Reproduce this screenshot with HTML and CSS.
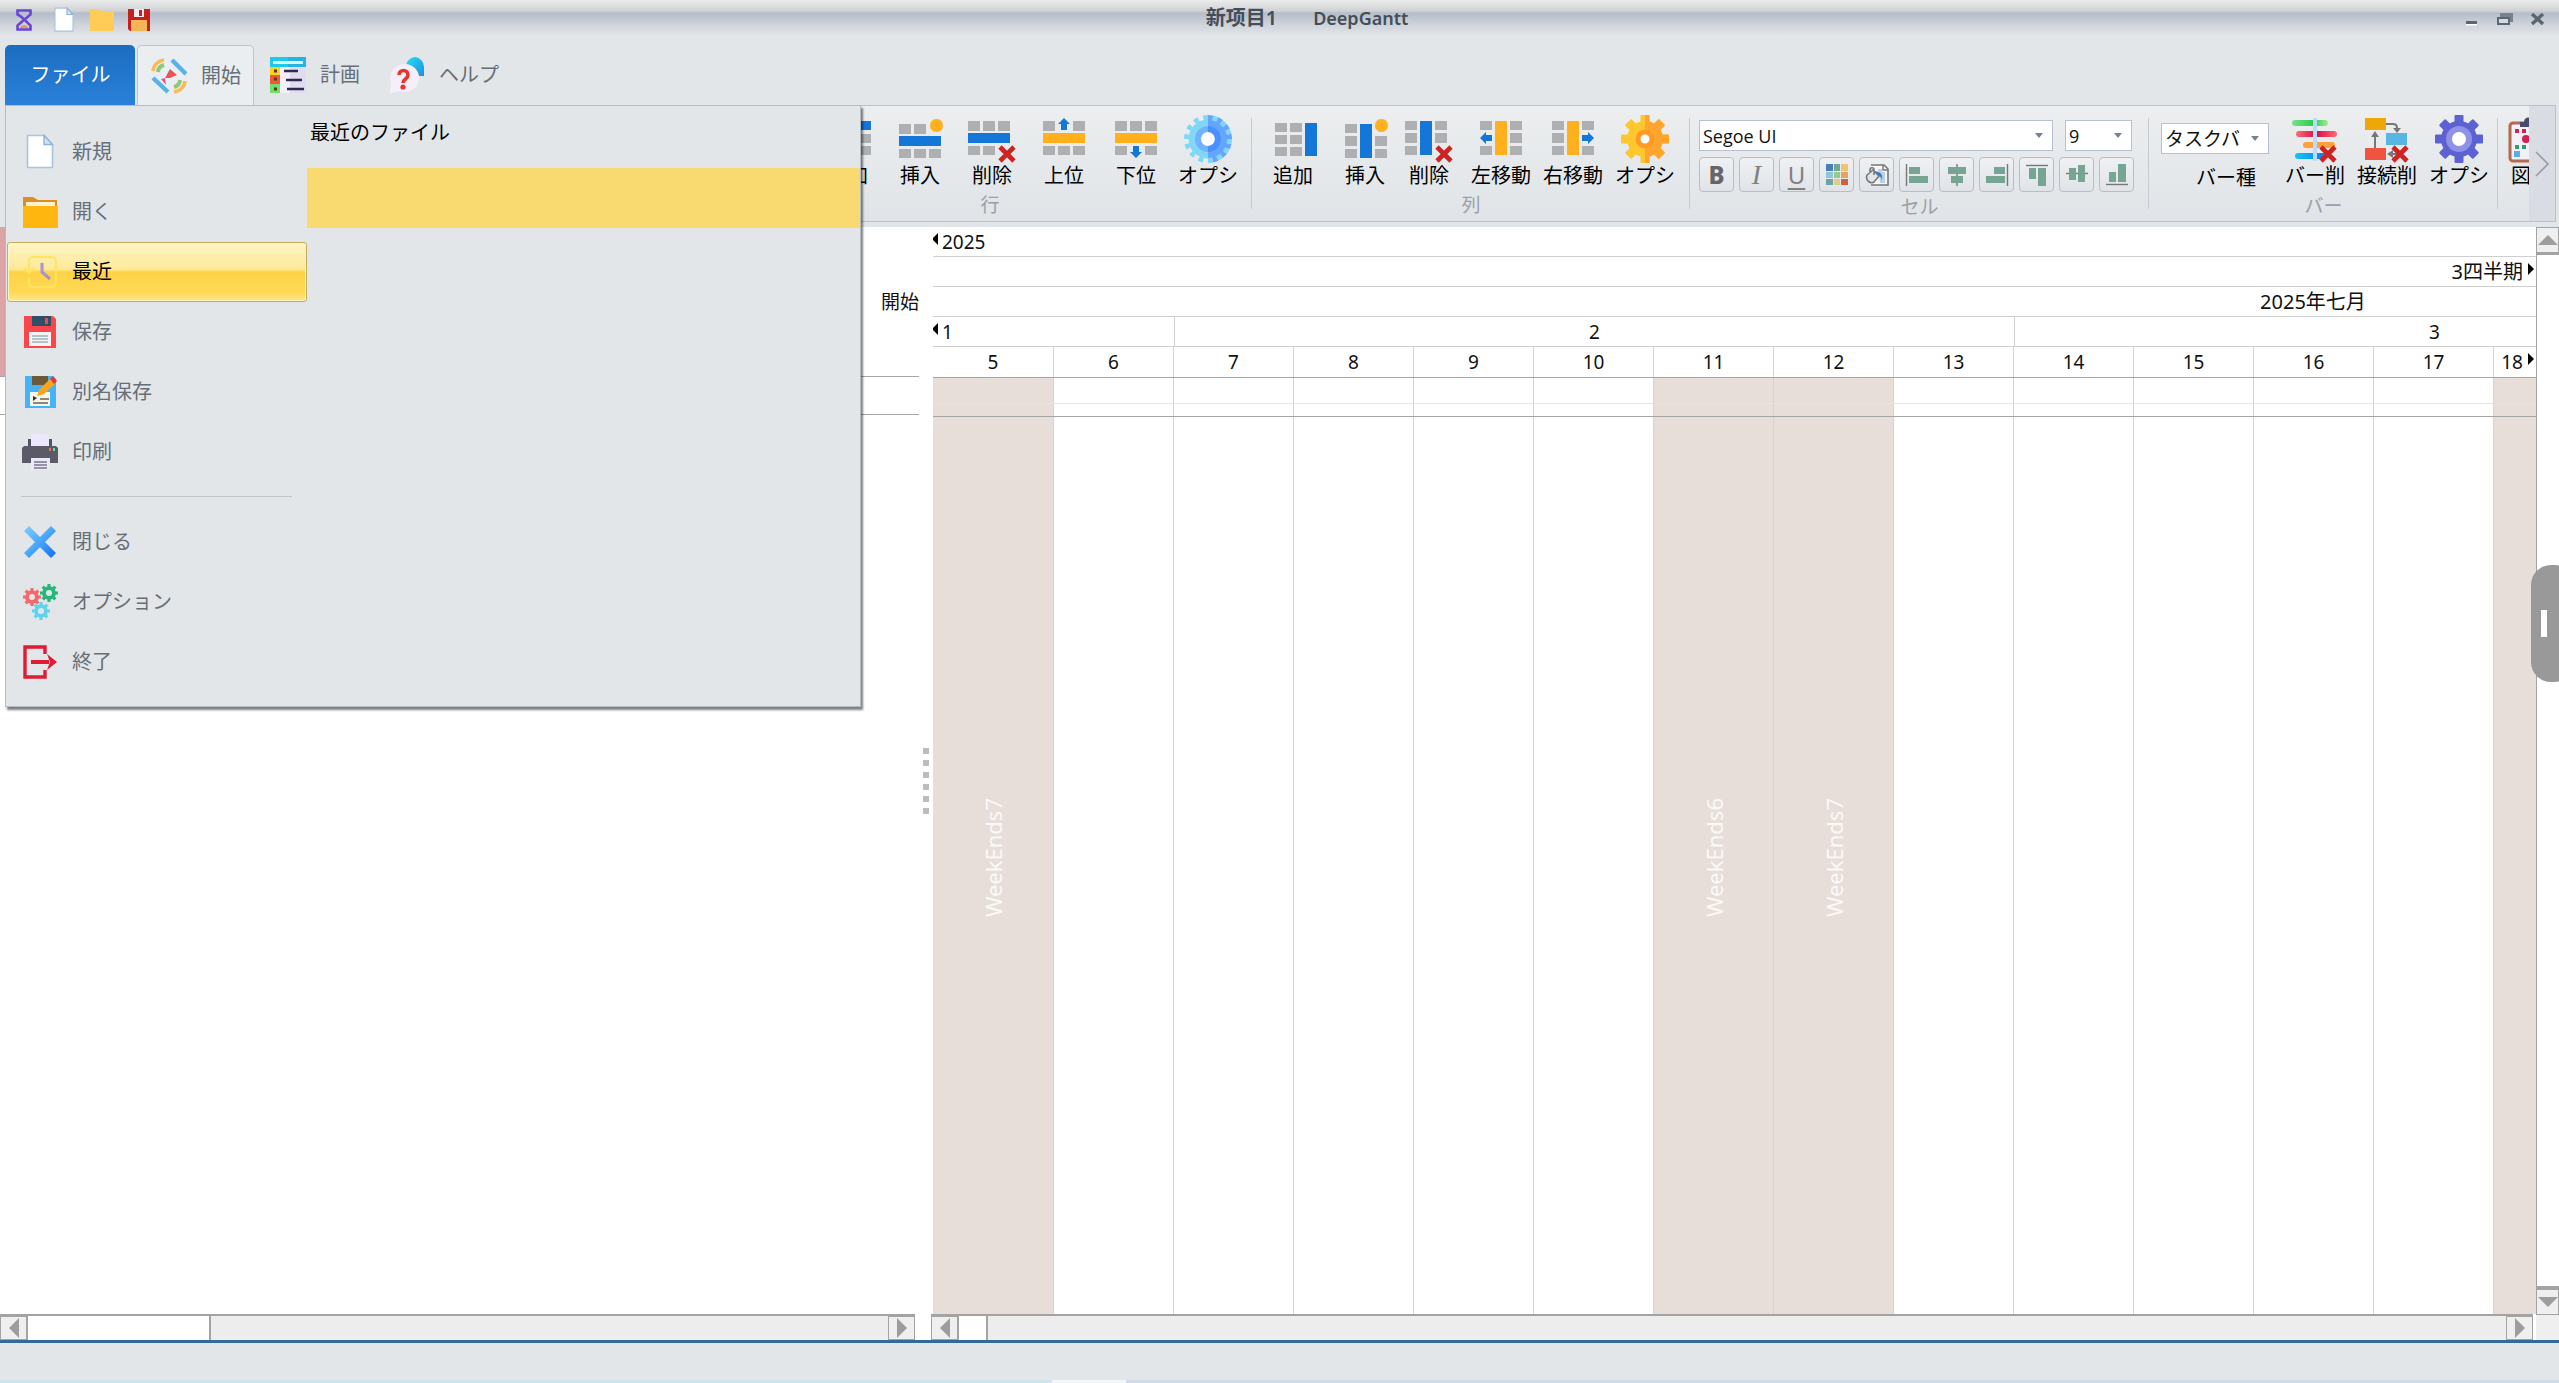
FILE: index.html
```html
<!DOCTYPE html>
<html lang="ja">
<head>
    <meta charset="UTF-8">
    <meta name="viewport" content="width=device-width, initial-scale=1.0">
    <title>新项目1 DeepGantt</title>
    <link rel="stylesheet" href="styles.css">
</head>
<body>
    <!-- Shared icon shapes -->
    <svg class="sprite" width="0" height="0" aria-hidden="true">
        <defs>
            <linearGradient id="closeBlue" x1="0" y1="0" x2="1" y2="1">
                <stop offset="0" stop-color="#7fd0ff"/>
                <stop offset="0.5" stop-color="#4aa5fb"/>
                <stop offset="1" stop-color="#0f6df5"/>
            </linearGradient>
            <linearGradient id="cyan" x1="0" y1="0" x2="1" y2="1">
                <stop offset="0" stop-color="#22e0f0"/>
                <stop offset="1" stop-color="#1f8fdf"/>
            </linearGradient>
            <linearGradient id="barGreen"><stop offset="0" stop-color="#7be08b"/><stop offset="0.6" stop-color="#26cf4d"/><stop offset="1" stop-color="#a5ea9c"/></linearGradient>
            <linearGradient id="barRed"><stop offset="0" stop-color="#ff6a78"/><stop offset="0.5" stop-color="#d80f45"/><stop offset="1" stop-color="#ff6a78"/></linearGradient>
            <linearGradient id="barBlue"><stop offset="0" stop-color="#14c6f5"/><stop offset="1" stop-color="#0a78ee"/></linearGradient>
        </defs>
        <symbol id="cross" viewBox="0 0 18 18">
            <path d="M2 2l14 14M16 2L2 16" stroke="#cf2222" stroke-width="4.600" fill="none"/>
        </symbol>
        <symbol id="spark" viewBox="0 0 16 16">
            <circle cx="8" cy="8" r="5" fill="#ffb01c"/>
            <path stroke="#ffb01c" stroke-width="2.200" d="M8 1v14M1 8h14M3 3l10 10M13 3L3 13M5.300 1.500l5.400 13M10.700 1.500l-5.400 13M1.500 5.300l13 5.400M1.500 10.700l13-5.400"/>
        </symbol>
        <symbol id="gear-shape" viewBox="-24 -24 48 48">
            <circle r="18"/>
            <rect x="-4.500" y="-24" width="9" height="48" rx="1"/>
            <rect x="-4.500" y="-24" width="9" height="48" rx="1" transform="rotate(45)"/>
            <rect x="-4.500" y="-24" width="9" height="48" rx="1" transform="rotate(90)"/>
            <rect x="-4.500" y="-24" width="9" height="48" rx="1" transform="rotate(135)"/>
        </symbol>
        <symbol id="small-gear" viewBox="-8 -8 16 16">
            <circle r="4.400" fill="none" stroke="currentColor" stroke-width="3.400"/>
            <path fill="none" stroke="currentColor" stroke-width="2.800" d="M0-8v3M0 5v3M-8 0h3M5 0h3M-5.600-5.600l2 2M3.600 3.600l2 2M5.600-5.600l-2 2M-3.600 3.600l-2 2"/>
        </symbol>
        <symbol id="page" viewBox="0 0 36 36">
            <path d="M5.500 1.500h17l8 9v23h-25z" fill="#fff" stroke="#a9c4de" stroke-width="1.600"/>
            <path d="M22 1.500v9h8.500z" fill="#cfe3f5" stroke="#8fb4d8" stroke-width="1.400"/>
        </symbol>
    </svg>

    <div class="window">
        <header class="titlebar">
            <div class="quick-access">
                <svg width="18" height="24" viewBox="0 0 18 24">
                    <path d="M2.500 2.500h13v4L6 14.500l-3.500 3v4h13v-4L6 8.500l-3.500-2z" fill="none" stroke="#6a45d6" stroke-width="2.600"/>
                    <path d="M5 20c0-4 8-4 8 0z" fill="#e8964e"/>
                </svg>
                <button type="button" aria-label="新規"><svg width="26" height="26" viewBox="0 0 36 36"><use href="#page"/></svg></button>
                <button type="button" aria-label="開く">
                    <svg width="26" height="24" viewBox="0 0 26 24"><path d="M1 1h9l3 3h12v19H1z" fill="#ffcc57"/></svg>
                </button>
                <button type="button" aria-label="保存">
                    <svg width="24" height="24" viewBox="0 0 24 24">
                        <path d="M1 1h22v22H3l-2-2z" fill="#c4201f"/>
                        <path d="M7 1h10v8H7z" fill="#eee"/><path d="M12 2h3v6h-3z" fill="#c4201f"/>
                        <path d="M4 12h16v11H4z" fill="#f5b556"/>
                    </svg>
                </button>
            </div>
            <h1 class="window-title"><span lang="zh">新项目1</span><span>DeepGantt</span></h1>
            <div class="window-buttons">
                <button type="button" aria-label="最小化"><svg width="18" height="18" viewBox="0 0 18 18"><path d="M3 10h11v3H3z" fill="#5b6672"/><path d="M3 13h11v1.500H3z" fill="#fff"/></svg></button>
                <button type="button" aria-label="元に戻す"><svg width="18" height="18" viewBox="0 0 18 18"><path d="M4 2h13v9h-3V6H4z" fill="#77828e"/><path d="M2 7h11v6H2z" fill="#d5dae0" stroke="#5b6672" stroke-width="2"/><path d="M1 6h13v2H1z" fill="#5b6672"/></svg></button>
                <button type="button" aria-label="閉じる"><svg width="18" height="18" viewBox="0 0 18 18"><path d="M3 3l11 10M14 3L3 13" stroke="#5b6672" stroke-width="3.400"/></svg></button>
            </div>
        </header>

        <nav class="tabs">
            <button type="button" class="tab tab-file">ファイル</button>
            <button type="button" class="tab tab-active">
                <svg width="36" height="36" viewBox="0 0 36 36">
                    <path d="M2 13A12 12 0 0 1 13 2" fill="none" stroke="#fbb95a" stroke-width="3.600"/>
                    <path d="M7 14a8 8 0 0 1 6-7" fill="none" stroke="#90c87a" stroke-width="4"/>
                    <path d="M34 23A12 12 0 0 1 23 34" fill="none" stroke="#fbb95a" stroke-width="3.600"/>
                    <path d="M29 22a8 8 0 0 1-6 7" fill="none" stroke="#90c87a" stroke-width="4"/>
                    <path d="M20 7L7 20l9 9 3-9 9-4z" fill="#e3f1fb"/>
                    <path d="M19 11l7 6-7 3-5 0z" fill="#ef5350"/>
                    <path d="M14 20l-4 1 5 6z" fill="#f0527e"/>
                    <path d="M21 2l14 14M2 20l15 14" stroke="#56b3ea" stroke-width="4.400"/>
                </svg>
                開始
            </button>
            <button type="button" class="tab">
                <svg width="36" height="36" viewBox="0 0 36 36">
                    <path d="M0 0h36v10H0z" fill="#1bcbe9"/><path d="M18 0h18v10H18z" fill="#26b3e2"/>
                    <path d="M3 4h30v3H3z" fill="#d9f6fc"/>
                    <path d="M10 10h26v26H10z" fill="#f3effb"/><path d="M20 10h16v26H20z" fill="#e2dcf2"/>
                    <path d="M0 10h10v8H0z" fill="#fbd21f"/><path d="M0 18h10v9H0z" fill="#ef5a32"/><path d="M0 27h10v9H0z" fill="#6fe06b"/>
                    <path d="M14 14h14M16 23h16M17 32h17" stroke="#2d2b52" stroke-width="2.400"/>
                    <path d="M4 14h3M4 22h3M4 32h3" stroke="#5a3a20" stroke-width="3"/>
                </svg>
                計画
            </button>
            <button type="button" class="tab">
                <svg width="36" height="36" viewBox="0 0 36 36">
                    <path d="M26 0a10 10 0 0 1 9 10v9H22L17 8a10 10 0 0 1 9-8z" fill="url(#cyan)"/>
                    <path d="M15 7a14 14 0 1 1-4 27L1 36l1-10A14 14 0 0 1 15 7z" fill="#f6eefb"/>
                    <path d="M10 18c0-6 9-6 9 0 0 4-5 4-5 8" fill="none" stroke="#e83528" stroke-width="3.600"/>
                    <circle cx="14" cy="30" r="2.600" fill="#e83528"/>
                </svg>
                ヘルプ
            </button>
        </nav>

        <section class="ribbon">
            <div class="group group-rows">
                <div class="group-items">
                    <button type="button" class="tool">
                        <svg width="48" height="48" viewBox="0 0 48 48">
                            <path fill="#1477d8" d="M5 6h42v9H5z"/>
                            <path fill="#adafb1" d="M5 19h12v9H5zM20 19h12v9H20zM35 19h12v9H35zM5 31h12v9H5zM20 31h12v9H20zM35 31h12v9H35z"/>
                        </svg>
                        追加
                    </button>
                    <button type="button" class="tool">
                        <svg width="48" height="48" viewBox="0 0 48 48">
                            <path fill="#adafb1" d="M3 9h12v10H3zM18 9h12v10H18zM3 34h12v9H3zM18 34h12v9H18zM33 34h12v9H33z"/>
                            <path fill="#1477d8" d="M3 21h42v10H3z"/>
                            <use href="#spark" x="33" y="3" width="15" height="15"/>
                        </svg>
                        挿入
                    </button>
                    <button type="button" class="tool">
                        <svg width="48" height="48" viewBox="0 0 48 48">
                            <path fill="#adafb1" d="M0 6h12v10H0zM15 6h12v10H15zM30 6h12v10H30zM0 31h12v9H0zM15 31h12v9H15z"/>
                            <path fill="#1477d8" d="M0 18h42v10H0z"/>
                            <use href="#cross" x="30" y="30" width="18" height="18"/>
                        </svg>
                        削除
                    </button>
                    <button type="button" class="tool">
                        <svg width="48" height="48" viewBox="0 0 48 48">
                            <path fill="#adafb1" d="M3 6h12v10H3zM33 6h12v10H33zM3 31h12v9H3zM18 31h12v9H18zM33 31h12v9H33z"/>
                            <path fill="#ffb01c" d="M3 18h42v10H3z"/>
                            <path fill="#1477d8" d="M24 3l6 6h-3v6h-6V9h-3z"/>
                        </svg>
                        上位
                    </button>
                    <button type="button" class="tool">
                        <svg width="48" height="48" viewBox="0 0 48 48">
                            <path fill="#adafb1" d="M3 6h12v10H3zM18 6h12v10H18zM33 6h12v10H33zM3 31h12v9H3zM33 31h12v9H33z"/>
                            <path fill="#ffb01c" d="M3 18h42v10H3z"/>
                            <path fill="#1477d8" d="M24 43l6-6h-3v-6h-6v6h-3z"/>
                        </svg>
                        下位
                    </button>
                    <button type="button" class="tool">
                        <svg width="48" height="48" viewBox="-24 -24 48 48">
                            <circle r="19.500" fill="#7fd8f8"/>
                            <path d="M0-19.500a19.500 19.500 0 0 1 0 39z" fill="#64a6ff"/>
                            <circle r="21.500" fill="none" stroke="#7fd8f8" stroke-width="5" stroke-dasharray="4.820 4.829" pathLength="135.090"/>
                            <path d="M0-21.500a21.500 21.500 0 0 1 0 43" fill="none" stroke="#64a6ff" stroke-width="5" stroke-dasharray="4.820 4.829" pathLength="67.550"/>
                            <circle r="10" fill="#fff" stroke="#6fb4fb" stroke-width="6"/>
                            <path d="M0-10a10 10 0 0 1 0 20" fill="none" stroke="#4a8ffc" stroke-width="6"/>
                        </svg>
                        オプシ
                    </button>
                </div>
                <div class="group-name">行</div>
            </div>

            <div class="group group-columns">
                <div class="group-items">
                    <button type="button" class="tool">
                        <svg width="48" height="48" viewBox="0 0 48 48">
                            <path fill="#adafb1" d="M6 8h12v9H6zM21 8h12v9H21zM6 20h12v9H6zM21 20h12v9H21zM6 32h12v9H6zM21 32h12v9H21z"/>
                            <path fill="#1477d8" d="M36 8h12v33H36z"/>
                        </svg>
                        追加
                    </button>
                    <button type="button" class="tool">
                        <svg width="48" height="48" viewBox="0 0 48 48">
                            <path fill="#adafb1" d="M4 9h12v9H4zM4 21h12v10H4zM4 34h12v9H4zM34 21h12v10H34zM34 34h12v9H34z"/>
                            <path fill="#1477d8" d="M19 9h12v34H19z"/>
                            <use href="#spark" x="33" y="3" width="15" height="15"/>
                        </svg>
                        挿入
                    </button>
                    <button type="button" class="tool tool-tight">
                        <svg width="48" height="48" viewBox="0 0 48 48">
                            <path fill="#adafb1" d="M0 6h12v9H0zM0 18h12v10H0zM0 31h12v9H0zM30 6h12v9H30zM30 18h12v10H30z"/>
                            <path fill="#1477d8" d="M15 6h12v34H15z"/>
                            <use href="#cross" x="30" y="30" width="18" height="18"/>
                        </svg>
                        削除
                    </button>
                    <button type="button" class="tool">
                        <svg width="48" height="48" viewBox="0 0 48 48">
                            <path fill="#adafb1" d="M3 6h12v9H3zM3 31h12v9H3zM33 6h12v9H33zM33 18h12v10H33zM33 31h12v9H33z"/>
                            <path fill="#ffb01c" d="M18 6h12v34H18z"/>
                            <path fill="#1477d8" d="M3 23l6-6v3h6v6H9v3z"/>
                        </svg>
                        左移動
                    </button>
                    <button type="button" class="tool">
                        <svg width="48" height="48" viewBox="0 0 48 48">
                            <path fill="#adafb1" d="M3 6h12v9H3zM3 18h12v10H3zM3 31h12v9H3zM33 6h12v9H33zM33 31h12v9H33z"/>
                            <path fill="#ffb01c" d="M18 6h12v34H18z"/>
                            <path fill="#1477d8" d="M45 23l-6-6v3h-6v6h6v3z"/>
                        </svg>
                        右移動
                    </button>
                    <button type="button" class="tool">
                        <svg width="48" height="48" viewBox="0 0 48 48">
                            <use href="#gear-shape" width="48" height="48" fill="#ffc72e"/>
                            <svg x="24" width="24" height="48" viewBox="24 0 24 48"><use href="#gear-shape" width="48" height="48" fill="#ffa52e"/></svg>
                            <circle cx="24" cy="24" r="7" fill="#fff" stroke="#ff9a26" stroke-width="5"/>
                        </svg>
                        オプシ
                    </button>
                </div>
                <div class="group-name">列</div>
            </div>

            <div class="group group-cells">
                <div class="font-row">
                    <span class="dropdown dropdown-font"><select aria-label="フォント"><option>Segoe UI</option></select></span>
                    <span class="dropdown dropdown-size"><select aria-label="サイズ"><option>9</option></select></span>
                </div>
                <div class="format-row">
                    <button type="button" class="format bold">B</button>
                    <button type="button" class="format italic">I</button>
                    <button type="button" class="format underline">U</button>
                    <button type="button" class="format" aria-label="文字色">
                        <svg width="24" height="24" viewBox="0 0 24 24">
                            <path fill="#4a7ebb" d="M1 1h7v7H1z"/><path fill="#6fa793" d="M9 1h6v7H9z"/><path fill="#efc470" d="M16 1h7v7h-7z"/>
                            <path fill="#8fc4de" d="M1 9h7v6H1z"/><path fill="#98c98b" d="M9 9h6v6H9z"/><path fill="#e6a55c" d="M16 9h7v6h-7z"/>
                            <path fill="#6fa3a8" d="M1 16h7v6H1z"/><path fill="#d9cf86" d="M9 16h6v6H9z"/><path fill="#d0623f" d="M16 16h7v6h-7z"/>
                        </svg>
                    </button>
                    <button type="button" class="format" aria-label="背景色">
                        <svg width="24" height="24" viewBox="0 0 24 24">
                            <path d="M6 2h13l4 4v16H6" fill="#f4f6f8" stroke="#777" stroke-width="1.600"/>
                            <path d="M18 2v5h5" fill="none" stroke="#777" stroke-width="1.400"/>
                            <path d="M13 6h4v3h3v11h-5z" fill="#b9d0ea"/>
                            <path d="M2 12l6-5 6 6-5 6c-3 2-9-1-7-7zM5 10V7c0-3 4-3 4 0v5" fill="#e3e6e9" stroke="#777" stroke-width="1.600"/>
                            <path d="M10 8c6 1 8 4 7 9-1-3-2-4-4-5z" fill="#3f78bd"/>
                        </svg>
                    </button>
                    <button type="button" class="format" aria-label="左揃え">
                        <svg width="24" height="24" viewBox="0 0 24 24"><path stroke="#777" stroke-width="1.400" d="M1.500 1v22"/><path fill="#76a594" d="M4 4h11v7H4zM4 13h19v7H4z"/></svg>
                    </button>
                    <button type="button" class="format" aria-label="中央揃え">
                        <svg width="24" height="24" viewBox="0 0 24 24"><path stroke="#777" stroke-width="1.400" d="M12 1v22"/><path fill="#76a594" d="M3 4h18v7H3zM6 13h12v7H6z"/></svg>
                    </button>
                    <button type="button" class="format" aria-label="右揃え">
                        <svg width="24" height="24" viewBox="0 0 24 24"><path stroke="#777" stroke-width="1.400" d="M22.500 1v22"/><path fill="#76a594" d="M9 4h11v7H9zM1 13h19v7H1z"/></svg>
                    </button>
                    <button type="button" class="format" aria-label="上揃え">
                        <svg width="24" height="24" viewBox="0 0 24 24"><path stroke="#777" stroke-width="1.400" d="M1 2.500h22"/><path fill="#76a594" d="M4 5h7v11H4zM13 5h8v18h-8z"/></svg>
                    </button>
                    <button type="button" class="format" aria-label="上下中央揃え">
                        <svg width="24" height="24" viewBox="0 0 24 24"><path stroke="#777" stroke-width="1.400" d="M1 10.500h22"/><path fill="#76a594" d="M4 5h7v12H4zM13 2h7v17h-7z"/></svg>
                    </button>
                    <button type="button" class="format" aria-label="下揃え">
                        <svg width="24" height="24" viewBox="0 0 24 24"><path stroke="#777" stroke-width="1.400" d="M1 21.500h22"/><path fill="#76a594" d="M4 9h7v10H4zM13 1h8v18h-8z"/></svg>
                    </button>
                </div>
                <div class="group-name">セル</div>
            </div>

            <div class="group group-bars">
                <div class="group-items">
                    <label class="bar-kind">
                        <span class="dropdown dropdown-bar"><select><option>タスクバ</option></select></span>
                        バー種
                    </label>
                    <button type="button" class="tool">
                        <svg width="48" height="48" viewBox="0 0 48 48">
                            <rect x="1" y="5" width="36" height="6" rx="3" fill="url(#barGreen)"/>
                            <rect x="5" y="16" width="41" height="6" rx="3" fill="url(#barRed)"/>
                            <rect x="12" y="27" width="32" height="6" rx="3" fill="#ffa03c"/>
                            <rect x="4" y="38" width="32" height="6" rx="3" fill="url(#barBlue)"/>
                            <path d="M22 3h4v43h-4z" fill="#b9dcfb"/>
                            <use href="#cross" x="28" y="30" width="18" height="18"/>
                        </svg>
                        バー削
                    </button>
                    <button type="button" class="tool">
                        <svg width="48" height="48" viewBox="0 0 48 48">
                            <path fill="none" stroke="#777" stroke-width="2" d="M22 9h8q4 0 4 4v3M12 33V20M38 39H28"/>
                            <path fill="#777" d="M30 13h8l-4 5zM8 22h8l-4-6zM30 35v8l-6-4z"/>
                            <path fill="#eea708" d="M2 3h21v12H2z"/><path fill="#58b7e2" d="M23 18h21v12H23z"/><path fill="#ef5440" d="M2 33h21v12H2z"/>
                            <use href="#cross" x="28" y="30" width="18" height="18"/>
                        </svg>
                        接続削
                    </button>
                    <button type="button" class="tool">
                        <svg width="48" height="48" viewBox="0 0 48 48">
                            <use href="#gear-shape" width="48" height="48" fill="#5c62d1"/>
                            <circle cx="24" cy="24" r="10" fill="#fff" stroke="#8f93e6" stroke-width="6"/>
                        </svg>
                        オプシ
                    </button>
                </div>
                <div class="group-name">バー</div>
            </div>

            <div class="group group-chart">
                <button type="button" class="tool">
                    <svg width="48" height="48" viewBox="0 0 48 48">
                        <rect x="3" y="8" width="38" height="38" rx="3" fill="#f3effb" stroke="#b5694e" stroke-width="3"/>
                        <path d="M13 12V7h4c0-6 8-6 8 0h4v5z" fill="#4a4a6e"/>
                        <path stroke="#d3224e" stroke-width="4" stroke-dasharray="4 3" d="M8 16h18"/>
                        <circle cx="19" cy="24" r="4" fill="#d3224e"/>
                        <path stroke="#2c9f6b" stroke-width="4" stroke-dasharray="4 3" d="M8 32h18"/>
                        <path d="M7 36h6v6H7z" fill="#5aaef0"/>
                    </svg>
                    図
                </button>
            </div>
            <button type="button" class="ribbon-next" aria-label="次へ">
                <svg width="16" height="28" viewBox="0 0 16 28"><path d="M2 2l12 12L2 26" fill="none" stroke="#9a9fa5" stroke-width="1.600"/></svg>
            </button>
        </section>

        <main class="workspace">
            <section class="task-pane">
                <table class="task-table">
                    <thead><tr><th>開始</th></tr></thead>
                    <tbody><tr><td></td></tr></tbody>
                </table>
                <div class="hscroll">
                    <button type="button" class="arrow left" aria-label="左へ"></button>
                    <div class="thumb thumb-wide"></div>
                    <div class="track"></div>
                    <button type="button" class="arrow right" aria-label="右へ"></button>
                </div>
            </section>

            <div class="splitter"><i></i><i></i><i></i><i></i><i></i><i></i></div>

            <section class="chart-pane">
                <div class="scale">
                    <div class="scale-row"><span class="from">2025</span></div>
                    <div class="scale-row"><span class="until quarter">3四半期</span></div>
                    <div class="scale-row"><span class="month">2025年七月</span></div>
                    <div class="scale-row">
                        <span class="from week-rest">1</span>
                        <span class="week">2</span>
                        <span class="week">3</span>
                    </div>
                    <div class="scale-row days">
                        <span>5</span><span>6</span><span>7</span><span>8</span><span>9</span><span>10</span><span>11</span>
                        <span>12</span><span>13</span><span>14</span><span>15</span><span>16</span><span>17</span><span class="until">18</span>
                    </div>
                </div>
                <div class="chart days">
                    <div class="weekend"><span>WeekEnds7</span></div>
                    <div></div><div></div><div></div><div></div><div></div>
                    <div class="weekend"><span>WeekEnds6</span></div>
                    <div class="weekend"><span>WeekEnds7</span></div>
                    <div></div><div></div><div></div><div></div><div></div>
                    <div class="weekend"></div>
                </div>
                <div class="hscroll">
                    <button type="button" class="arrow left" aria-label="左へ"></button>
                    <div class="thumb thumb-narrow"></div>
                    <div class="track"></div>
                    <button type="button" class="arrow right" aria-label="右へ"></button>
                </div>
            </section>

            <div class="vscroll">
                <button type="button" class="arrow up" aria-label="上へ"></button>
                <div class="vthumb"></div>
                <button type="button" class="arrow down" aria-label="下へ"></button>
                <div class="corner"></div>
            </div>
        </main>

        <footer class="statusbar"></footer>
        <div class="desktop-edge"></div>

        <!-- File menu -->
        <div class="file-menu">
            <div class="menu-list">
                <button type="button" class="menu-item"><svg width="36" height="36" viewBox="0 0 36 36"><use href="#page"/></svg>新規</button>
                <button type="button" class="menu-item">
                    <svg width="36" height="36" viewBox="0 0 36 36"><path d="M1 3h10l5 3h19v12H1z" fill="#dd8e22"/><path d="M4 8h29v8H4z" fill="#fff1cf"/><path d="M1 12h35v22H1z" fill="#ffb70f"/></svg>
                    開く
                </button>
                <button type="button" class="menu-item selected">
                    <svg width="36" height="36" viewBox="0 0 36 36"><path d="M7 12V8c0-3 2-5 5-5h17c3 0 5 2 5 5v20c0 3-2 5-5 5H12c-3 0-5-2-5-5v-5M2 14l5 5 5-5M7 12v7" fill="none" stroke="#ffe45e" stroke-width="1.800"/><path d="M20 9v9l8 7" fill="none" stroke="#a693cf" stroke-width="3"/></svg>
                    最近
                </button>
                <button type="button" class="menu-item">
                    <svg width="36" height="36" viewBox="0 0 36 36"><path d="M2 2h29l3 3v29H2z" fill="#f8464c"/><path d="M10 2h19v10H10z" fill="#2f4f66"/><path d="M23 4h3v6h-3z" fill="#f8464c"/><path d="M7 18h22v14H7z" fill="#f4f4f4"/><path d="M10 22h16M10 25h16M10 28h16" stroke="#9fb1bf" stroke-width="1.600"/></svg>
                    保存
                </button>
                <button type="button" class="menu-item">
                    <svg width="36" height="36" viewBox="0 0 36 36"><path d="M3 2h28l3 3v29H3z" fill="#43b4f5"/><path d="M10 2h16v9H10z" fill="#6b5a3a"/><path d="M8 18h20v14H8z" fill="#f7f4e8"/><path d="M18 25h9M11 29h15" stroke="#8d8776" stroke-width="2"/><path d="M11 22l4 2-4 3z" fill="#333"/><path d="M15 22l2-6L28 5l5 5-11 10z" fill="#fba31c"/><path d="M28 5l3-3 4 5-3 3z" fill="#e03a3a"/></svg>
                    別名保存
                </button>
                <button type="button" class="menu-item">
                    <svg width="36" height="36" viewBox="0 0 36 36"><path d="M6 5h24v9H6z" fill="#53535f"/><path d="M2 12h32l2 2v15H0V14z" fill="#5b5b68"/><path d="M10 0h15l2 3v9H9V1z" fill="#ece8fb"/><path d="M9 24h19v12H9z" fill="#ece8fb"/><path d="M12 28h13M12 31h13M12 34h13" stroke="#77778c" stroke-width="1.400"/><path d="M27 14h2v3h-2z" fill="#ef6a6a"/><path d="M31 14h2v3h-2z" fill="#5ee0a0"/></svg>
                    印刷
                </button>
                <hr>
                <button type="button" class="menu-item">
                    <svg width="36" height="36" viewBox="0 0 36 36"><path d="M7 2l11 11L29 2l5 5-11 11 11 11-5 5-11-11L7 34l-5-5 11-11L2 7z" fill="url(#closeBlue)"/></svg>
                    閉じる
                </button>
                <button type="button" class="menu-item">
                    <svg width="36" height="36" viewBox="0 0 36 36"><use href="#small-gear" x="1" y="4" width="18" height="18" color="#f4676a"/><use href="#small-gear" x="18" y="0" width="18" height="18" color="#23b878"/><use href="#small-gear" x="10" y="18" width="18" height="18" color="#62d3ec"/></svg>
                    オプション
                </button>
                <button type="button" class="menu-item">
                    <svg width="36" height="36" viewBox="0 0 36 36"><path d="M23 10V3H3v30h20v-7" fill="none" stroke="#e11a36" stroke-width="3.400"/><path d="M9 16h18v4H9z" fill="#e11a36"/><path d="M25 10l10 8-10 8 3-8z" fill="#e11a36"/></svg>
                    終了
                </button>
            </div>
            <div class="recent">
                <h2>最近のファイル</h2>
                <div class="recent-file"></div>
            </div>
        </div>

        <div class="side-handle"></div>
    </div>
</body>
</html>
```

FILE: styles.css
```css
/* General */
* {
    box-sizing: border-box;
}

body {
    margin: 0;
    font-family: "Noto Sans", "Noto Sans CJK JP", sans-serif;
    font-size: 19px;
    line-height: 30px;
    color: #111;
    background-color: #e2e6e9;
}

button {
    margin: 0;
    padding: 0;
    border: 0;
    background: none;
    font: inherit;
    color: inherit;
}

svg {
    display: block;
    flex-shrink: 0;
}

.sprite {
    position: absolute;
}

.window {
    position: relative;
    display: flex;
    flex-direction: column;
    height: 100vh;
    overflow: hidden;
}

/* Title bar */
.titlebar {
    display: flex;
    align-items: center;
    height: 45px;
    padding: 0 12px 6px 15px;
    background: linear-gradient(#ebecec 0, #cfd1d4 11px, #b6bdc8 13px, #cdd2d9 24px, #e2e6e9 36px);
}

.quick-access {
    display: flex;
    align-items: center;
    gap: 12px;
}

.quick-access > svg {
    margin-right: 6px;
}

.window-title {
    flex: 1;
    display: flex;
    justify-content: center;
    gap: 36px;
    margin: 0;
    padding-bottom: 3px;
    font-family: "Noto Sans", "Noto Sans CJK SC", sans-serif;
    font-size: 18px;
    font-weight: 600;
    color: #454d57;
}

.window-title span:first-child {
    font-size: 20px;
}

.window-buttons {
    display: flex;
    gap: 15px;
}

/* Tabs */
.tabs {
    display: flex;
    gap: 2px;
    height: 60px;
    padding-left: 5px;
}

.tab {
    display: flex;
    align-items: center;
    gap: 14px;
    padding: 0 13px 0 14px;
    border-radius: 5px 5px 0 0;
    font-size: 20px;
    color: #666e78;
}

.tab-file {
    justify-content: center;
    width: 130px;
    background: linear-gradient(#1b6dc1, #2a80d8);
    color: #fff;
}

.tab-active {
    padding: 0 12px 0 13px;
    border: 1px solid #bfc5cb;
    border-bottom: 0;
    background-color: #eaeef1;
}

/* Ribbon */
.ribbon {
    position: relative;
    display: flex;
    height: 117px;
    margin: 0 3px 5px 5px;
    padding-left: 722px;
    border: 1px solid #b9c0c7;
    background: linear-gradient(#eceeef, #e0e4e8);
    overflow: hidden;
}

.group {
    position: relative;
    display: flex;
    flex-direction: column;
    flex-shrink: 0;
    padding-top: 9px;
}

.group::after {
    content: "";
    position: absolute;
    top: 12px;
    bottom: 12px;
    right: 0;
    width: 1px;
    background-color: #c6cbd1;
}

.group-rows {
    width: 524px;
}

.group-rows .group-items {
    padding-left: 88px;
}

.group-columns {
    width: 438px;
}

.group-columns .group-items {
    padding-left: 9px;
}

.group-items {
    display: flex;
    gap: 8px;
}

.tool {
    display: flex;
    flex-direction: column;
    align-items: center;
    width: 64px;
    font-size: 20px;
    line-height: 26px;
    white-space: nowrap;
    color: #000;
}

.tool-tight {
    margin-left: -8px;
}

.group-name {
    margin-top: auto;
    line-height: 31px;
    text-align: center;
    color: #9aa0a8;
}

.group-cells {
    width: 459px;
    padding: 14px 0 0 9px;
}

.group-cells .group-name {
    padding-right: 9px;
}

.font-row {
    display: flex;
    gap: 12px;
}

.format-row {
    display: flex;
    gap: 5px;
    margin-top: 6px;
}

.dropdown {
    position: relative;
    display: block;
}

.dropdown::after {
    content: "";
    position: absolute;
    top: 13px;
    right: 10px;
    border: 4px solid transparent;
    border-top: 5px solid #75828f;
    border-bottom: 0;
}

.dropdown select {
    display: block;
    appearance: none;
    width: 100%;
    height: 31px;
    padding: 0 3px;
    border: 1px solid #b7c0d0;
    border-radius: 0;
    background-color: #fff;
    font: inherit;
    font-family: "Open Sans", "Noto Sans CJK JP", sans-serif;
    font-size: 18px;
    color: #111;
}

.dropdown-font {
    width: 354px;
}

.dropdown-size {
    width: 67px;
}

.dropdown-bar {
    width: 108px;
}

.dropdown-bar select {
    font-size: 19px;
}

.format {
    display: flex;
    align-items: center;
    justify-content: center;
    width: 35px;
    height: 35px;
    border: 1px solid #b9bec5;
    border-radius: 4px;
    background: linear-gradient(#eff1f3, #dfe3e8);
    font-size: 24px;
    line-height: 28px;
    color: #808080;
}

.bold {
    font-weight: 800;
    color: #666;
}

.italic {
    font-family: "Liberation Serif", serif;
    font-size: 28px;
    font-style: italic;
}

.underline {
    text-decoration: underline;
    text-decoration-thickness: 2px;
    text-underline-offset: 4px;
}

.group-bars {
    width: 349px;
}

.group-bars .group-items {
    padding-left: 12px;
}

.bar-kind {
    width: 114px;
    padding-top: 8px;
    line-height: 26px;
    font-size: 20px;
    text-align: right;
    color: #000;
}

.bar-kind .dropdown {
    margin-bottom: 11px;
}

.bar-kind {
    padding-right: 19px;
}

.bar-kind .dropdown-bar {
    text-align: left;
}

.group-chart {
    padding-left: 9px;
}

.group-chart .tool {
    width: 48px;
    align-items: flex-start;
    text-indent: 4px;
}

.ribbon-next {
    position: absolute;
    top: 0;
    right: 0;
    bottom: 0;
    display: flex;
    align-items: center;
    justify-content: center;
    width: 26px;
    background-color: #d9dce2;
}

/* Workspace */
.workspace {
    display: flex;
    flex: 1;
    min-height: 0;
    border-bottom: 3px solid #35699a;
    background-color: #fff;
}

.task-pane {
    display: flex;
    flex-direction: column;
    justify-content: space-between;
    width: 919px;
}

.task-table {
    width: 100%;
    border-spacing: 0;
}

.task-table th {
    height: 150px;
    padding: 0;
    border-bottom: 1px solid #a5a5a5;
    background: linear-gradient(90deg, #dba3a5 6px, #fff 6px);
    font-size: 19px;
    font-weight: 400;
    text-align: right;
}

.task-table td {
    height: 38px;
    padding: 0;
    border-bottom: 1px solid #a5a5a5;
}

.task-pane .hscroll {
    margin-right: 4px;
}

.splitter {
    display: flex;
    flex-direction: column;
    align-items: center;
    justify-content: center;
    gap: 6px;
    width: 14px;
    padding-bottom: 6px;
}

.splitter i {
    width: 6px;
    height: 6px;
    background-color: #bdbdbd;
}

.chart-pane {
    display: flex;
    flex: 1;
    flex-direction: column;
    min-width: 0;
}

/* Time scale */
.scale-row {
    display: flex;
    height: 30px;
    border-bottom: 1px solid #cfcfcf;
    line-height: 30px;
    overflow: hidden;
}

.scale-row:last-child {
    height: 31px;
    border-bottom-color: #a5a5a5;
}

.from {
    position: relative;
    padding-left: 9px;
}

.until {
    position: relative;
    margin-left: auto;
    padding-right: 13px;
}

.quarter,
.month {
    font-size: 20px;
}

.from::before,
.until::after {
    content: "";
    position: absolute;
    top: 6px;
    border: 6px solid transparent;
}

.from::before {
    left: -7px;
    border-right-color: #000;
}

.until::after {
    right: -4px;
    border-left-color: #000;
}

/* July is 31 days wide and starts 4 days before the first column */
.month {
    flex: 0 0 3720px;
    margin-left: -480px;
    text-align: center;
}

.week-rest {
    flex: 0 0 241px;
}

.week {
    flex: 0 0 840px;
    border-left: 1px solid #d0d0d0;
    text-align: center;
}

.days {
    display: grid;
    grid-template-columns: 121px repeat(12, 120px) 1fr;
}

.days > * {
    border-right: 1px solid #d4d4d4;
    text-align: center;
}

.days > :last-child {
    border-right: 0;
}

.days > .until {
    text-align: right;
}

.chart {
    position: relative;
    flex: 1;
}

.chart::before {
    content: "";
    position: absolute;
    top: 0;
    left: 0;
    right: 0;
    height: 38px;
    border-bottom: 1px solid #a5a5a5;
    background: linear-gradient(#e4e4e4, #e4e4e4) 0 25px / 100% 1px no-repeat;
}

.weekend {
    display: flex;
    align-items: center;
    justify-content: center;
    padding-top: 24px;
    background-color: #e7deda;
}

.weekend span {
    writing-mode: vertical-rl;
    transform: rotate(180deg);
    font-size: 22px;
    color: #fbf8f6;
}

/* Scrollbars */
.hscroll {
    display: flex;
    height: 26px;
    border-top: 2px solid #a3a3a3;
    background-color: #ededed;
}

.chart-pane .hscroll {
    margin: 0 3px 0 -2px;
}

.arrow {
    display: flex;
    align-items: center;
    justify-content: center;
    width: 27px;
    border: 1px solid #a3a3a3;
    background-color: #efefef;
}

.arrow::before {
    content: "";
    border: 10px solid transparent;
}

.left::before {
    border-left-width: 0;
    border-right-color: #9d9d9d;
}

.right::before {
    border-right-width: 0;
    border-left-color: #9d9d9d;
}

.up::before {
    border-top-width: 0;
    border-bottom-color: #9d9d9d;
}

.down::before {
    border-bottom-width: 0;
    border-top-color: #9d9d9d;
}

.thumb {
    border: solid #a3a3a3;
    border-width: 0 2px 0 1px;
    background-color: #fff;
}

.thumb-wide {
    width: 184px;
}

.thumb-narrow {
    width: 30px;
}

.track {
    flex: 1;
}

.vscroll {
    display: flex;
    flex-direction: column;
    width: 23px;
}

.vscroll .arrow {
    width: 23px;
    height: 26px;
}

.vthumb {
    flex: 1;
    border: solid #a3a3a3;
    border-width: 2px 0 3px 1px;
    background-color: #fff;
}

.corner {
    height: 25px;
    background-color: #efefef;
}

.statusbar {
    height: 37px;
    background-color: #e2e6e9;
}

.desktop-edge {
    height: 3px;
    background: linear-gradient(90deg, #cfe5ee 1052px, #f2f6f8 1052px, #f2f6f8 1126px, #cfdbe8 1126px);
}

/* File menu */
.file-menu {
    position: absolute;
    top: 105px;
    left: 5px;
    display: flex;
    width: 856px;
    height: 602px;
    border: 1px solid #b5bcc3;
    background-color: #e2e6e9;
    box-shadow: 2px 3px 2px rgba(0, 0, 0, 0.5);
}

.menu-list {
    width: 301px;
    padding: 16px 0 0 1px;
}

.menu-item {
    display: flex;
    align-items: center;
    gap: 14px;
    width: 100%;
    height: 60px;
    padding-left: 15px;
    font-size: 20px;
    color: #666e78;
}

.selected {
    border: 1px solid #c7ab5c;
    border-radius: 3px;
    padding-left: 14px;
    background: linear-gradient(#fff4c4, #fde998 45%, #fcd348 50%, #ffd954 85%, #ffe88f);
    box-shadow: inset 0 0 0 1px #fff3bf;
    color: #000;
}

.menu-list hr {
    width: 271px;
    margin: 14px 0 15px 14px;
    border: 0;
    border-top: 1px solid #bfc5cb;
}

.recent {
    flex: 1;
}

.recent h2 {
    margin: 0;
    padding: 12px 0 20px 3px;
    font-size: 20px;
    font-weight: 400;
    color: #000;
}

.recent-file {
    height: 60px;
    background-color: #f8da70;
}

/* Handle on the screen edge */
.side-handle {
    position: absolute;
    top: 565px;
    right: -16px;
    width: 44px;
    height: 117px;
    border-radius: 20px;
    background: linear-gradient(#fff, #fff) 10px center / 6px 27px no-repeat #999;
}
```
